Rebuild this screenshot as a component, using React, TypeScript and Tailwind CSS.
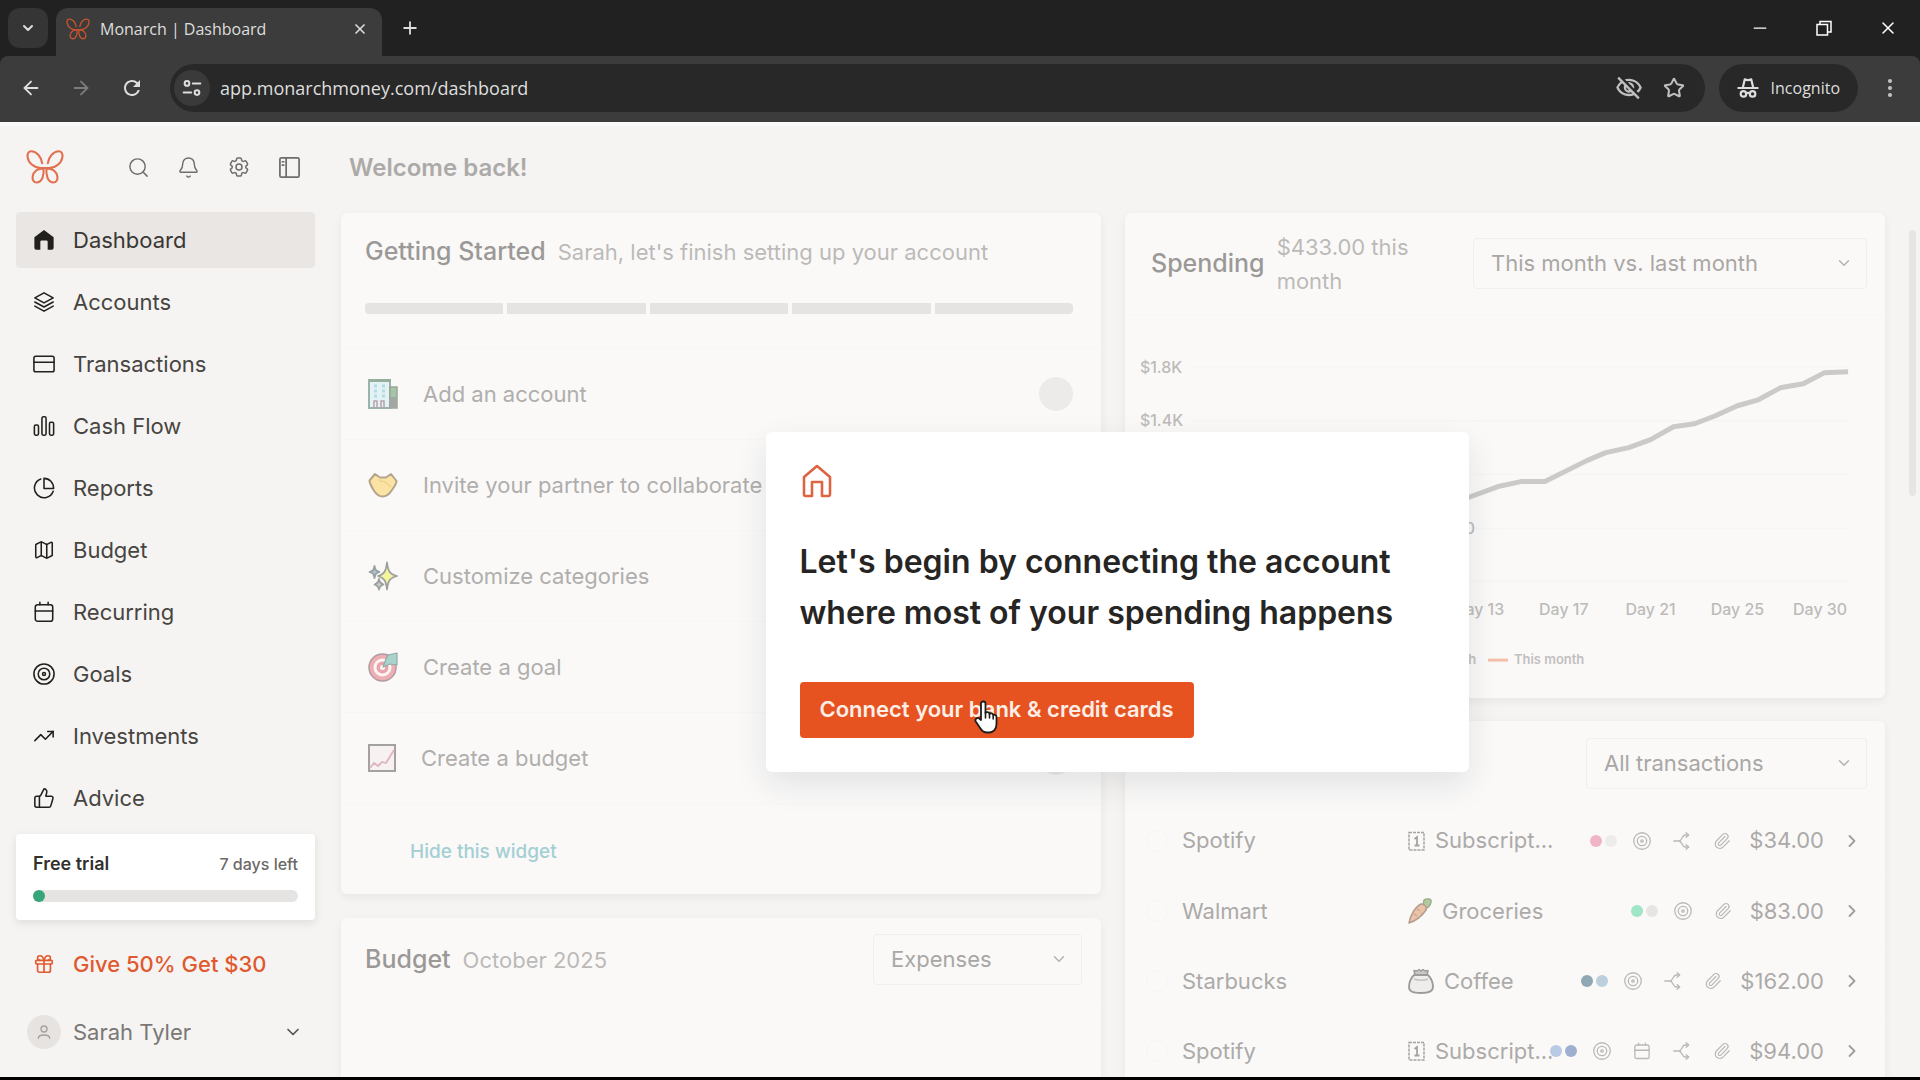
import type { ReactNode } from "react";
import {
  ArrowLeft,
  ArrowRight,
  Bell,
  ChevronDown,
  ChevronRight,
  Gift,
  Map,
  Minus,
  MoreVertical,
  Paperclip,
  Plus,
  Search,
  Star,
  ThumbsUp,
  TrendingUp,
  X,
} from "lucide-react";
import { HiOutlineCog6Tooth } from "react-icons/hi2";
import { MdOutlineVisibilityOff, MdRefresh } from "react-icons/md";

type IconProps = { className?: string };

function Svg({ className, children, strokeWidth = 1.7 }: IconProps & { children: ReactNode; strokeWidth?: number }) {
  return (
    <svg
      viewBox="0 0 24 24"
      fill="none"
      stroke="currentColor"
      strokeWidth={strokeWidth}
      strokeLinecap="round"
      strokeLinejoin="round"
      className={className}
      aria-hidden="true"
    >
      {children}
    </svg>
  );
}

function MonarchLogo({ className }: IconProps) {
  return (
    <svg viewBox="0 0 40 36" fill="none" stroke="currentColor" strokeWidth="2.2" strokeLinecap="round" className={className} aria-hidden="true">
      <path d="M17 14C16 7 11 1.500 5.500 1.500C2.500 1.500 1.200 4 1.700 7.500C2.500 13.500 8 18.500 15.500 19" />
      <path d="M23 14C24 7 29 1.500 34.500 1.500C37.500 1.500 38.800 4 38.300 7.500C37.500 13.500 32 18.500 24.500 19" />
      <path d="M15.500 19H24.500" />
      <path d="M18.500 19.500C19 26 17.500 34 11.500 34.300C8 34.400 6.400 31.500 7 28C7.900 23 12 19.500 18.500 19.500Z" />
      <path d="M21.500 19.500C21 26 22.500 34 28.500 34.300C32 34.400 33.600 31.500 33 28C32.100 23 28 19.500 21.500 19.500Z" />
    </svg>
  );
}

function HomeSolid({ className }: IconProps) {
  return (
    <svg viewBox="0 0 24 24" fill="currentColor" className={className} aria-hidden="true">
      <path d="M12 1 22.500 9V20.500a2 2 0 0 1-2 2H16V14a1.500 1.500 0 0 0-1.500-1.500h-5A1.500 1.500 0 0 0 8 14v8.500H3.500a2 2 0 0 1-2-2V9Z" />
    </svg>
  );
}

function HomeOutline({ className }: IconProps) {
  return (
    <svg viewBox="0 0 30 34" fill="none" stroke="currentColor" strokeWidth="2.600" strokeLinejoin="round" className={className} aria-hidden="true">
      <path d="M15 2 28 13V30.500a1.500 1.500 0 0 1-1.500 1.500H20V18H10V32H3.500A1.500 1.500 0 0 1 2 30.500V13Z" />
    </svg>
  );
}

function LayersIcon({ className }: IconProps) {
  return (
    <Svg className={className}>
      <path d="M12 2 22 7.500 12 13 2 7.500Z" />
      <path d="M2 12l10 5.500L22 12" />
      <path d="M2 16.500 12 22l10-5.500" />
    </Svg>
  );
}

function CardIcon({ className }: IconProps) {
  return (
    <Svg className={className}>
      <rect x="1" y="3.500" width="22" height="17" rx="2" />
      <path d="M1 10h22" />
    </Svg>
  );
}

function BarsIcon({ className }: IconProps) {
  return (
    <Svg className={className}>
      <rect x="1.500" y="11" width="4.500" height="11" rx="1.500" />
      <rect x="9.750" y="2" width="4.500" height="20" rx="1.500" />
      <rect x="18" y="8" width="4.500" height="14" rx="1.500" />
    </Svg>
  );
}

function PieIcon({ className }: IconProps) {
  return (
    <Svg className={className}>
      <path d="M8.500 2.200A10.500 10.500 0 1 0 22 15.500" />
      <path d="M12 1.500V12.500H22.500C22.500 6 18 1.500 12 1.500Z" />
    </Svg>
  );
}

function CalendarIcon({ className }: IconProps) {
  return (
    <Svg className={className}>
      <rect x="2.500" y="4" width="19" height="18" rx="2.500" />
      <path d="M2.500 11h19M7.500 1.500V4M16.500 1.500V4" />
    </Svg>
  );
}

function GoalIcon({ className }: IconProps) {
  return (
    <Svg className={className}>
      <circle cx="12" cy="12" r="11" />
      <circle cx="12" cy="12" r="6.300" />
      <circle cx="12" cy="12" r="1.600" />
    </Svg>
  );
}

function PanelIcon({ className }: IconProps) {
  return (
    <Svg className={className} strokeWidth={1.8}>
      <rect x="2" y="2" width="20" height="20" rx="1.500" />
      <path d="M8.500 2v20M4.500 6h1.500M4.500 9.500h1.500" />
    </Svg>
  );
}

function SplitIcon({ className }: IconProps) {
  return (
    <Svg className={className}>
      <path d="M1 12h7c4 0 4-8 8-8h4M8 12c4 0 4 8 8 8h4" />
      <path d="M17.500 1 21 4l-3.500 3M17.500 17l3.500 3-3.500 3" />
    </Svg>
  );
}

function UserIcon({ className }: IconProps) {
  return (
    <Svg className={className} strokeWidth={2}>
      <circle cx="12" cy="7.500" r="4.500" />
      <path d="M3.500 21.500c0-3.500 3-5 8.500-5s8.500 1.500 8.500 5" />
    </Svg>
  );
}

function SiteSettingsIcon({ className }: IconProps) {
  return (
    <Svg className={className} strokeWidth={2.4}>
      <circle cx="6" cy="6.500" r="2.800" />
      <path d="M13 6.500h9M2 17.500h9" />
      <circle cx="18" cy="17.500" r="2.800" />
    </Svg>
  );
}

function IncognitoIcon({ className }: IconProps) {
  return (
    <Svg className={className} strokeWidth={2.4}>
      <path d="M6.500 11 8.500 2.500l3.500 1 3.500-1 2 8.500" />
      <path d="M1.500 12h21" />
      <circle cx="7" cy="18.500" r="3" />
      <circle cx="17" cy="18.500" r="3" />
      <path d="M10 18c1-.8 3-.8 4 0" />
    </Svg>
  );
}

function OfficeEmoji() {
  return (
    <svg viewBox="0 0 30 30" className="size-[30px]" aria-hidden="true">
      <rect x="1" y="1" width="21" height="28" fill="#e3f3f5" stroke="#9bb3aa" strokeWidth="2" />
      <path d="M1 1.500h22" stroke="#96ae9e" strokeWidth="3" />
      <path d="M22 8h7v21h-7z" fill="#a9c3a6" stroke="#98a896" strokeWidth="1.500" />
      <path d="M22 18h7v11h-7z" fill="#a3a7a3" />
      <path d="M6 7h3M14 7h3M6 12h3M14 12h3M6 17h3M14 17h3" stroke="#b5dbe2" strokeWidth="3" />
      <path d="M6 29v-7h3v7M13 29v-7h3v7" fill="none" stroke="#b9a3ab" strokeWidth="1.500" />
    </svg>
  );
}

function HandshakeEmoji() {
  return (
    <svg viewBox="0 0 30 26" className="h-[26px] w-[30px]" aria-hidden="true">
      <path
        d="M7 2 1.500 8.500C1.500 12 4 15 5.500 18c2.500 4 6 6.500 9 6.500 4 0 7-2.500 9.500-6.500C26 15 28.500 12 28.500 9L23 2l-5 3.500h-6Z"
        fill="#fbe3a4"
        stroke="#b5a48c"
        strokeWidth="2"
        strokeLinejoin="round"
      />
      <path d="M12 5.500c-1 3 1 5 4 3.500l7 6" fill="none" stroke="#edd08f" strokeWidth="1.200" />
    </svg>
  );
}

function SparklesEmoji() {
  return (
    <svg viewBox="0 0 30 30" className="size-[30px]" aria-hidden="true" stroke="#9c9fa0" strokeWidth="1.800" strokeLinejoin="round">
      <path d="M19 1.500c1 8.500 2.500 11.500 10 13.500-7.500 2-9 5-10 13.500-1-8.500-2.500-11.500-9-13.500 6.500-2 8-5 9-13.500Z" fill="#f4f59c" />
      <path d="M6.500 5c.6 4 1.500 5 5 6-3.500 1-4.400 2-5 6-.6-4-1.500-5-5-6 3.500-1 4.400-2 5-6Z" fill="#a5c4de" />
      <path d="M11 18c.5 3.500 1.500 4.500 4.500 5.500-3 1-4 2-4.500 5-.5-3-1.500-4-4.500-5 3-1 4-2 4.500-5.500Z" fill="#c8cbcc" />
    </svg>
  );
}

function TargetEmoji() {
  return (
    <svg viewBox="0 0 30 30" className="size-[30px]" aria-hidden="true">
      <circle cx="14.500" cy="15.500" r="13.500" fill="#eeafb4" stroke="#b09ba0" strokeWidth="1.500" />
      <circle cx="14.500" cy="15.500" r="9" fill="#fdf5f4" />
      <circle cx="14.500" cy="15.500" r="6" fill="#e9a5aa" />
      <circle cx="14.500" cy="15.500" r="2.500" fill="#fdf5f4" />
      <path d="M15 15 18 7 20 3l9-2v12L22 12Z" fill="#a8d4cc" stroke="#93aaa6" strokeWidth="1.200" strokeLinejoin="round" />
    </svg>
  );
}

function ChartEmoji() {
  return (
    <svg viewBox="0 0 28 28" className="size-7" aria-hidden="true">
      <rect x="1" y="1" width="26" height="26" fill="#f7f1f1" stroke="#a3a1a2" strokeWidth="2" />
      <path d="M2 24 6 19l4 3 4-4 4 1 8-13" fill="none" stroke="#dfb5bd" strokeWidth="1.800" />
    </svg>
  );
}

function CalendarEmoji() {
  return (
    <svg viewBox="0 0 17 20" className="h-5 w-[17px] shrink-0" fill="none" stroke="#a5a3a1" aria-hidden="true">
      <rect x="1" y="1.500" width="15" height="17.500" strokeWidth="1.500" strokeDasharray="3 1" />
      <path d="M6.500 8 9 6v8M6.500 14.500h5" strokeWidth="1.800" />
    </svg>
  );
}

function CarrotEmoji() {
  return (
    <svg viewBox="0 0 24 26" className="h-[26px] w-6 shrink-0" strokeLinejoin="round" aria-hidden="true">
      <path d="M16 2c2-1.500 6-1.500 7 0 .5 3-1 6-4 8l-4-3Z" fill="#b2cb9e" stroke="#9aa88c" strokeWidth="1.300" />
      <path d="M1 25C2 18 7 9 13 6c4 0 6 3 5 6C14 18 7 23 1 25Z" fill="#ecc3a8" stroke="#b3a092" strokeWidth="1.600" />
      <path d="m9 11 3 2M6 16l3 2M13 15l2 1" stroke="#c9a48e" strokeWidth="1.200" />
    </svg>
  );
}

function CoffeeEmoji() {
  return (
    <svg viewBox="0 0 26 26" className="size-[26px] shrink-0" strokeLinejoin="round" aria-hidden="true">
      <path d="M7 7 6 2.500 9 3l2-1.500L13 3l2-1.500L17 3l3-.5L19 7" fill="#c9c7c5" stroke="#9d9b99" strokeWidth="1.500" />
      <path d="M6 7h14c3 3 5 8 5 12 0 4-3 6-12 6S1 23 1 19 3 10 6 7Z" fill="#eeedeb" stroke="#9d9b99" strokeWidth="1.800" />
      <path d="M6 11c3 1.500 11 1.500 14 0" fill="none" stroke="#c6c4c2" strokeWidth="1.500" />
    </svg>
  );
}

function PointerCursor({ className }: IconProps) {
  return (
    <svg viewBox="0 0 24 34" className={className} aria-hidden="true">
      <path
        d="M7 20V3.500C7 .8 11.500.8 11.500 3.500V13c.5-1.500 3.800-1.200 4 .8 1-1 3.500-.6 3.700 1.200 1.200-.6 3.300 0 3.300 2V24c0 5-3 8.500-7.500 8.500h-2c-3 0-5-1.500-6.500-4L1.700 21.500C.5 19.200 3.500 17 5.300 18.500Z"
        fill="#fff"
        stroke="#1c1c1c"
        strokeWidth="1.800"
        strokeLinejoin="round"
      />
      <path d="M11.500 12v6M15.500 14v4M19.200 15v4" stroke="#1c1c1c" strokeWidth="1.600" strokeLinecap="round" />
    </svg>
  );
}

function BrowserChrome() {
  return (
    <header className="shrink-0 bg-[#212121] font-['Open_Sans',sans-serif] text-[#dedede]">
      <div className="flex h-14 items-stretch">
        <div className="flex items-center px-2">
          <button aria-label="Search tabs" className="flex size-10 items-center justify-center rounded-xl bg-[#353535]">
            <ChevronDown className="size-4" strokeWidth={3} />
          </button>
        </div>
        <div className="mt-2 flex w-[326px] items-center rounded-t-xl bg-[#3c3c3c] pb-1.5 pl-2.5 pr-3.5">
          <MonarchLogo className="h-[22px] w-6 text-[#c9532f]" />
          <span className="ml-2.5 flex-1 text-base">Monarch | Dashboard</span>
          <button aria-label="Close tab">
            <X className="size-4" strokeWidth={2.5} />
          </button>
        </div>
        <button aria-label="New tab" className="ml-4 flex w-6 items-center justify-center">
          <Plus className="size-5" strokeWidth={2.2} />
        </button>
        <div className="ml-auto flex items-center gap-[46px] pr-[22px] text-white">
          <button aria-label="Minimize">
            <Minus className="size-5" strokeWidth={1.5} />
          </button>
          <button aria-label="Restore">
            <svg viewBox="0 0 16 16" fill="none" stroke="currentColor" strokeWidth="1.500" className="size-4" aria-hidden="true">
              <path d="M1 4.500h10.500V15H1zM4 4.500V1.500h11V12h-3.500" />
            </svg>
          </button>
          <button aria-label="Close">
            <X className="size-5" strokeWidth={1.8} />
          </button>
        </div>
      </div>
      <div className="flex h-[66px] items-center rounded-t-lg bg-[#3c3c3c] pb-0.5 pl-5 pr-[18px]">
        <button aria-label="Back">
          <ArrowLeft className="size-[22px]" strokeWidth={2} />
        </button>
        <button aria-label="Forward" className="ml-7 text-[#7c7c7c]">
          <ArrowRight className="size-[22px]" strokeWidth={2} />
        </button>
        <button aria-label="Reload" className="ml-7">
          <MdRefresh className="size-6" />
        </button>
        <div className="ml-[26px] flex h-12 flex-1 items-center rounded-full bg-[#282828] pl-1 pr-5">
          <button aria-label="View site information" className="flex size-9 items-center justify-center rounded-full bg-[#3a3a3a]">
            <SiteSettingsIcon className="size-5" />
          </button>
          <input
            aria-label="Address"
            className="ml-2.5 flex-1 bg-transparent text-lg outline-none"
            defaultValue="app.monarchmoney.com/dashboard"
          />
          <MdOutlineVisibilityOff className="size-7 text-[#c0c0c0]" />
          <button aria-label="Bookmark this tab" className="ml-5">
            <Star className="size-[22px] text-[#c0c0c0]" strokeWidth={2.2} />
          </button>
        </div>
        <button className="ml-3.5 flex h-12 items-center gap-3 rounded-full bg-[#282828] px-[18px]">
          <IncognitoIcon className="size-[22px]" />
          <span className="text-base">Incognito</span>
        </button>
        <button aria-label="Menu" className="ml-5">
          <MoreVertical className="size-6 text-[#c0c0c0]" strokeWidth={2.2} />
        </button>
      </div>
    </header>
  );
}

const navItems = [
  { label: "Dashboard", icon: HomeSolid, active: true },
  { label: "Accounts", icon: LayersIcon },
  { label: "Transactions", icon: CardIcon },
  { label: "Cash Flow", icon: BarsIcon },
  { label: "Reports", icon: PieIcon },
  { label: "Budget", icon: Map },
  { label: "Recurring", icon: CalendarIcon },
  { label: "Goals", icon: GoalIcon },
  { label: "Investments", icon: TrendingUp },
  { label: "Advice", icon: ThumbsUp },
];

function Sidebar() {
  return (
    <aside className="flex w-[329px] shrink-0 flex-col pl-4 pr-3.5">
      <div className="flex h-[86px] items-center pb-1 pl-2.5">
        <MonarchLogo className="h-9 w-[38px] text-[#e2704f]" />
        <div className="ml-auto flex items-center gap-[27px] pr-3.5 text-[#6f6c69]">
          <button aria-label="Search">
            <Search className="size-[23px]" strokeWidth={1.5} />
          </button>
          <button aria-label="Notifications">
            <Bell className="size-[23px]" strokeWidth={1.5} />
          </button>
          <button aria-label="Settings">
            <HiOutlineCog6Tooth className="size-6" />
          </button>
          <button aria-label="Toggle sidebar">
            <PanelIcon className="size-[23px]" />
          </button>
        </div>
      </div>

      <nav className="flex flex-col gap-1.5">
        {navItems.map(({ label, icon: Icon, active }) => (
          <a
            key={label}
            href="#"
            className={`flex h-14 items-center gap-[18px] rounded pl-[17px] text-[22px] ${
              active ? "bg-[#eae6e3] text-[#3a3734]" : "text-[#474441]"
            }`}
          >
            <Icon className="size-[22px] text-[#22201d]" strokeWidth={1.7} />
            {label}
          </a>
        ))}
      </nav>

      <div className="mt-2 h-[86px] rounded bg-white px-[17px] pt-4 shadow-[0_3px_8px_rgba(40,30,20,0.1)]">
        <div className="flex items-center justify-between">
          <span className="text-lg font-semibold text-[#33302d]">Free trial</span>
          <span className="text-base font-medium text-[#6b6865]">7 days left</span>
        </div>
        <div className="mt-3 h-3 rounded-full bg-[#e6e4e3]">
          <div className="size-3 rounded-full bg-[#36a57a]" />
        </div>
      </div>

      <a href="#" className="mt-4 flex h-14 items-center gap-[18px] pl-[17px] text-[22px] font-medium text-[#e0592f]">
        <Gift className="size-[22px]" strokeWidth={1.8} />
        Give 50% Get $30
      </a>

      <button className="mt-3 flex h-14 items-center pl-[11px] pr-3 text-[22px] text-[#7a7775]">
        <span className="flex size-[34px] items-center justify-center rounded-full bg-[#e6e3e1] text-[#a5a19e]">
          <UserIcon className="size-4" />
        </span>
        <span className="ml-3">Sarah Tyler</span>
        <ChevronDown className="ml-auto size-5 text-[#55524f]" strokeWidth={2} />
      </button>
    </aside>
  );
}

function Card({ className = "", children }: { className?: string; children: ReactNode }) {
  return <section className={`rounded-md bg-[#faf9f8] shadow-[0_3px_10px_rgba(40,30,20,0.06)] ${className}`}>{children}</section>;
}

function Select({ label, options, className = "" }: { label: string; options: string[]; className?: string }) {
  return (
    <div className={`relative ${className}`}>
      <select
        aria-label={label}
        className="h-[51px] w-full appearance-none rounded border border-[#f1efee] bg-transparent pl-[17px] text-[22px] text-[#a9a7a5]"
      >
        {options.map((option) => (
          <option key={option}>{option}</option>
        ))}
      </select>
      <ChevronDown className="pointer-events-none absolute right-3.5 top-4 size-[18px] text-[#b5b3b1]" strokeWidth={2} />
    </div>
  );
}

const steps = [
  { label: "Add an account", icon: OfficeEmoji },
  { label: "Invite your partner to collaborate", icon: HandshakeEmoji },
  { label: "Customize categories", icon: SparklesEmoji },
  { label: "Create a goal", icon: TargetEmoji },
  { label: "Create a budget", icon: ChartEmoji },
];

function GettingStarted() {
  return (
    <Card className="h-[681px]">
      <div className="h-[136px] border-b border-[#f7f6f5] px-6 pt-5">
        <div className="flex items-baseline gap-3">
          <h2 className="text-[25px] font-medium text-[#9b9997]">Getting Started</h2>
          <p className="text-[22px] text-[#bcbab8]">Sarah, let's finish setting up your account</p>
        </div>
        <div className="mr-1 mt-8 flex gap-1 overflow-hidden rounded">
          {steps.map((step) => (
            <div key={step.label} className="h-[11px] flex-1 bg-[#e5e4e3]" />
          ))}
        </div>
      </div>
      <ul>
        {steps.map(({ label, icon: Icon }) => (
          <li key={label} className="flex h-[91px] items-center border-b border-[#f7f6f5] pl-[27px] pr-7">
            <Icon />
            <span className="ml-[25px] flex-1 text-[22px] text-[#b0aeac]">{label}</span>
            <span className="size-[34px] rounded-full bg-[#ecebea]" />
          </li>
        ))}
      </ul>
      <a href="#" className="ml-[69px] mt-[34px] inline-block text-[19px] font-medium text-[#a3cfd4]">
        Hide this widget
      </a>
    </Card>
  );
}

function SpendingChart() {
  return (
    <svg viewBox="0 0 762 380" className="mt-1 w-full" aria-label="Spending chart">
      <g stroke="#f6f5f4" strokeWidth="1.500">
        <path d="M68 48H725M68 102H725M68 156H725M68 210H725M68 263H725" />
      </g>
      <polyline
        fill="none"
        stroke="#cbcac9"
        strokeWidth="5"
        strokeLinejoin="round"
        points="96,250 140,236 183,226 226,212 270,200 305,192 325,186 347,178 374,168 397,163 421,163 463,142 482,134 505,129 527,121 550,108 571,105 592,97 614,87 635,81 657,69 680,65 701,54 725,53"
      />
      <g fill="#bdbbb9" fontSize="16" fontWeight="500">
        <text x="15" y="54">$1.8K</text>
        <text x="15" y="107">$1.4K</text>
        <text x="351" y="216" textAnchor="end">$433.00</text>
        <text x="355" y="297" textAnchor="middle">Day 13</text>
        <text x="440" y="297" textAnchor="middle">Day 17</text>
        <text x="527" y="297" textAnchor="middle">Day 21</text>
        <text x="614" y="297" textAnchor="middle">Day 25</text>
        <text x="724" y="297" textAnchor="end">Day 30</text>
      </g>
      <path d="M364 342h20" stroke="#f6bfa9" strokeWidth="3" />
      <g fill="#c2c0be" fontSize="13" fontWeight="600">
        <text x="352" y="346" textAnchor="end">Last month</text>
        <text x="390" y="346">This month</text>
      </g>
    </svg>
  );
}

function Spending() {
  return (
    <Card className="h-[485px]">
      <div className="flex h-[102px] items-center border-b border-[#f7f6f5] pl-[26px] pr-[18px]">
        <h2 className="text-[25px] font-medium text-[#9b9997]">Spending</h2>
        <p className="ml-3 w-44 text-[22px] leading-[34px] text-[#bcbab8]">$433.00 this month</p>
        <Select label="Spending period" options={["This month vs. last month"]} className="ml-auto w-[394px]" />
      </div>
      <SpendingChart />
    </Card>
  );
}

const transactions = [
  { merchant: "Spotify", category: "Subscript...", icon: CalendarEmoji, tags: ["bg-[#efb4c8]", "bg-[#ececeb]"], recurring: false, split: true, amount: "$34.00" },
  { merchant: "Walmart", category: "Groceries", icon: CarrotEmoji, tags: ["bg-[#9fe5c6]", "bg-[#e6e5e4]"], recurring: false, split: false, amount: "$83.00" },
  { merchant: "Starbucks", category: "Coffee", icon: CoffeeEmoji, tags: ["bg-[#8fa8b5]", "bg-[#bccfdd]"], recurring: false, split: true, amount: "$162.00" },
  { merchant: "Spotify", category: "Subscript...", icon: CalendarEmoji, tags: ["bg-[#b9cae4]", "bg-[#9eafcf]"], recurring: true, split: true, amount: "$94.00" },
];

function Transactions() {
  return (
    <Card className="flex-1">
      <div className="flex h-[85px] items-center pl-[26px] pr-[18px]">
        <h2 className="text-[25px] font-medium text-[#9b9997]">Transactions</h2>
        <Select label="Transaction filter" options={["All transactions"]} className="ml-auto w-[281px]" />
      </div>
      <table className="w-full table-fixed text-[22px] text-[#acaaa8]">
        <colgroup>
          <col />
          <col className="w-[127px]" />
          <col className="w-[350px]" />
        </colgroup>
        <tbody>
          {transactions.map(({ merchant, category, icon: Icon, tags, recurring, split, amount }, index) => (
            <tr key={index} className="h-[70px] border-b border-[#f8f7f6]">
              <td className="p-0">
                <div className="flex items-center gap-3.5 pl-[21px]">
                  <span className="size-[22px] rounded-full border border-[#f7f6f5]" />
                  {merchant}
                </div>
              </td>
              <td className="p-0">
                <div className="flex items-center gap-2.5 whitespace-nowrap">
                  <Icon />
                  {category}
                </div>
              </td>
              <td className="p-0">
                <div className="flex items-center justify-end pr-[23px] text-[#bab8b6]">
                  <span className="flex gap-[3px]">
                    {tags.map((tag) => (
                      <span key={tag} className={`size-3 rounded-full ${tag}`} />
                    ))}
                  </span>
                  <div className="ml-4 flex items-center gap-[22px]">
                    <GoalIcon className="size-[18px]" />
                    {recurring && <CalendarIcon className="size-[18px]" />}
                    {split && <SplitIcon className="size-[18px]" />}
                    <Paperclip className="size-[18px]" strokeWidth={1.6} />
                  </div>
                  <span className="ml-[18px] text-[#acaaa8]">{amount}</span>
                  <ChevronRight className="ml-[18px] size-5 text-[#a09e9c]" strokeWidth={2.2} />
                </div>
              </td>
            </tr>
          ))}
        </tbody>
      </table>
    </Card>
  );
}

function Budget() {
  return (
    <Card className="flex-1">
      <div className="flex h-[84px] items-center border-b border-[#f8f7f6] pl-6 pr-[19px]">
        <div className="flex items-baseline gap-3">
          <h2 className="text-[25px] font-medium text-[#9b9997]">Budget</h2>
          <p className="text-[22px] text-[#bcbab8]">October 2025</p>
        </div>
        <Select label="Budget view" options={["Expenses", "Income"]} className="ml-auto w-[209px]" />
      </div>
    </Card>
  );
}

function ConnectDialog() {
  return (
    <div
      role="dialog"
      aria-labelledby="connect-title"
      className="w-[703px] rounded-md bg-white px-[34px] pb-[34px] pt-8 shadow-[0_12px_32px_rgba(30,25,50,0.1)]"
    >
      <HomeOutline className="ml-0.5 h-[34px] w-[30px] text-[#dd6440]" />
      <h1 id="connect-title" className="mt-[38px] text-[32px] font-semibold leading-[51px] text-[#262524]">
        Let's begin by connecting the account where most of your spending happens
      </h1>
      <button className="relative mt-11 h-14 rounded bg-[#e65321] px-5 text-[22px] font-semibold text-[#fdeee6]">
        Connect your bank &amp; credit cards
        <PointerCursor className="absolute left-[174px] top-[18px] h-[34px] w-6" />
      </button>
    </div>
  );
}

export default function App() {
  return (
    <div className="flex h-screen flex-col overflow-hidden border-b-[3px] border-black bg-[#f5f4f2] font-[Inter,sans-serif]">
      <BrowserChrome />
      <div className="flex min-h-0 flex-1 border-t-4 border-[#fbfafa]">
        <Sidebar />
        <main className="relative flex min-w-0 flex-1">
          <div className="flex min-w-0 flex-1 flex-col pl-3 pr-5">
            <div className="flex h-[87px] shrink-0 items-center pb-1 pl-2">
              <h1 className="text-2xl font-semibold text-[#acaaa8]">Welcome back!</h1>
            </div>
            <div className="grid min-h-0 flex-1 grid-cols-2 gap-6">
              <div className="flex flex-col gap-6">
                <GettingStarted />
                <Budget />
              </div>
              <div className="flex flex-col gap-[23px]">
                <Spending />
                <Transactions />
              </div>
            </div>
          </div>
          <div className="w-[15px] shrink-0 px-1 pt-[104px]">
            <div className="h-[266px] rounded-full bg-[#e6e5e4]" />
          </div>
          <div className="absolute inset-y-0 left-0 right-[15px] flex items-center justify-center">
            <ConnectDialog />
          </div>
        </main>
      </div>
    </div>
  );
}
